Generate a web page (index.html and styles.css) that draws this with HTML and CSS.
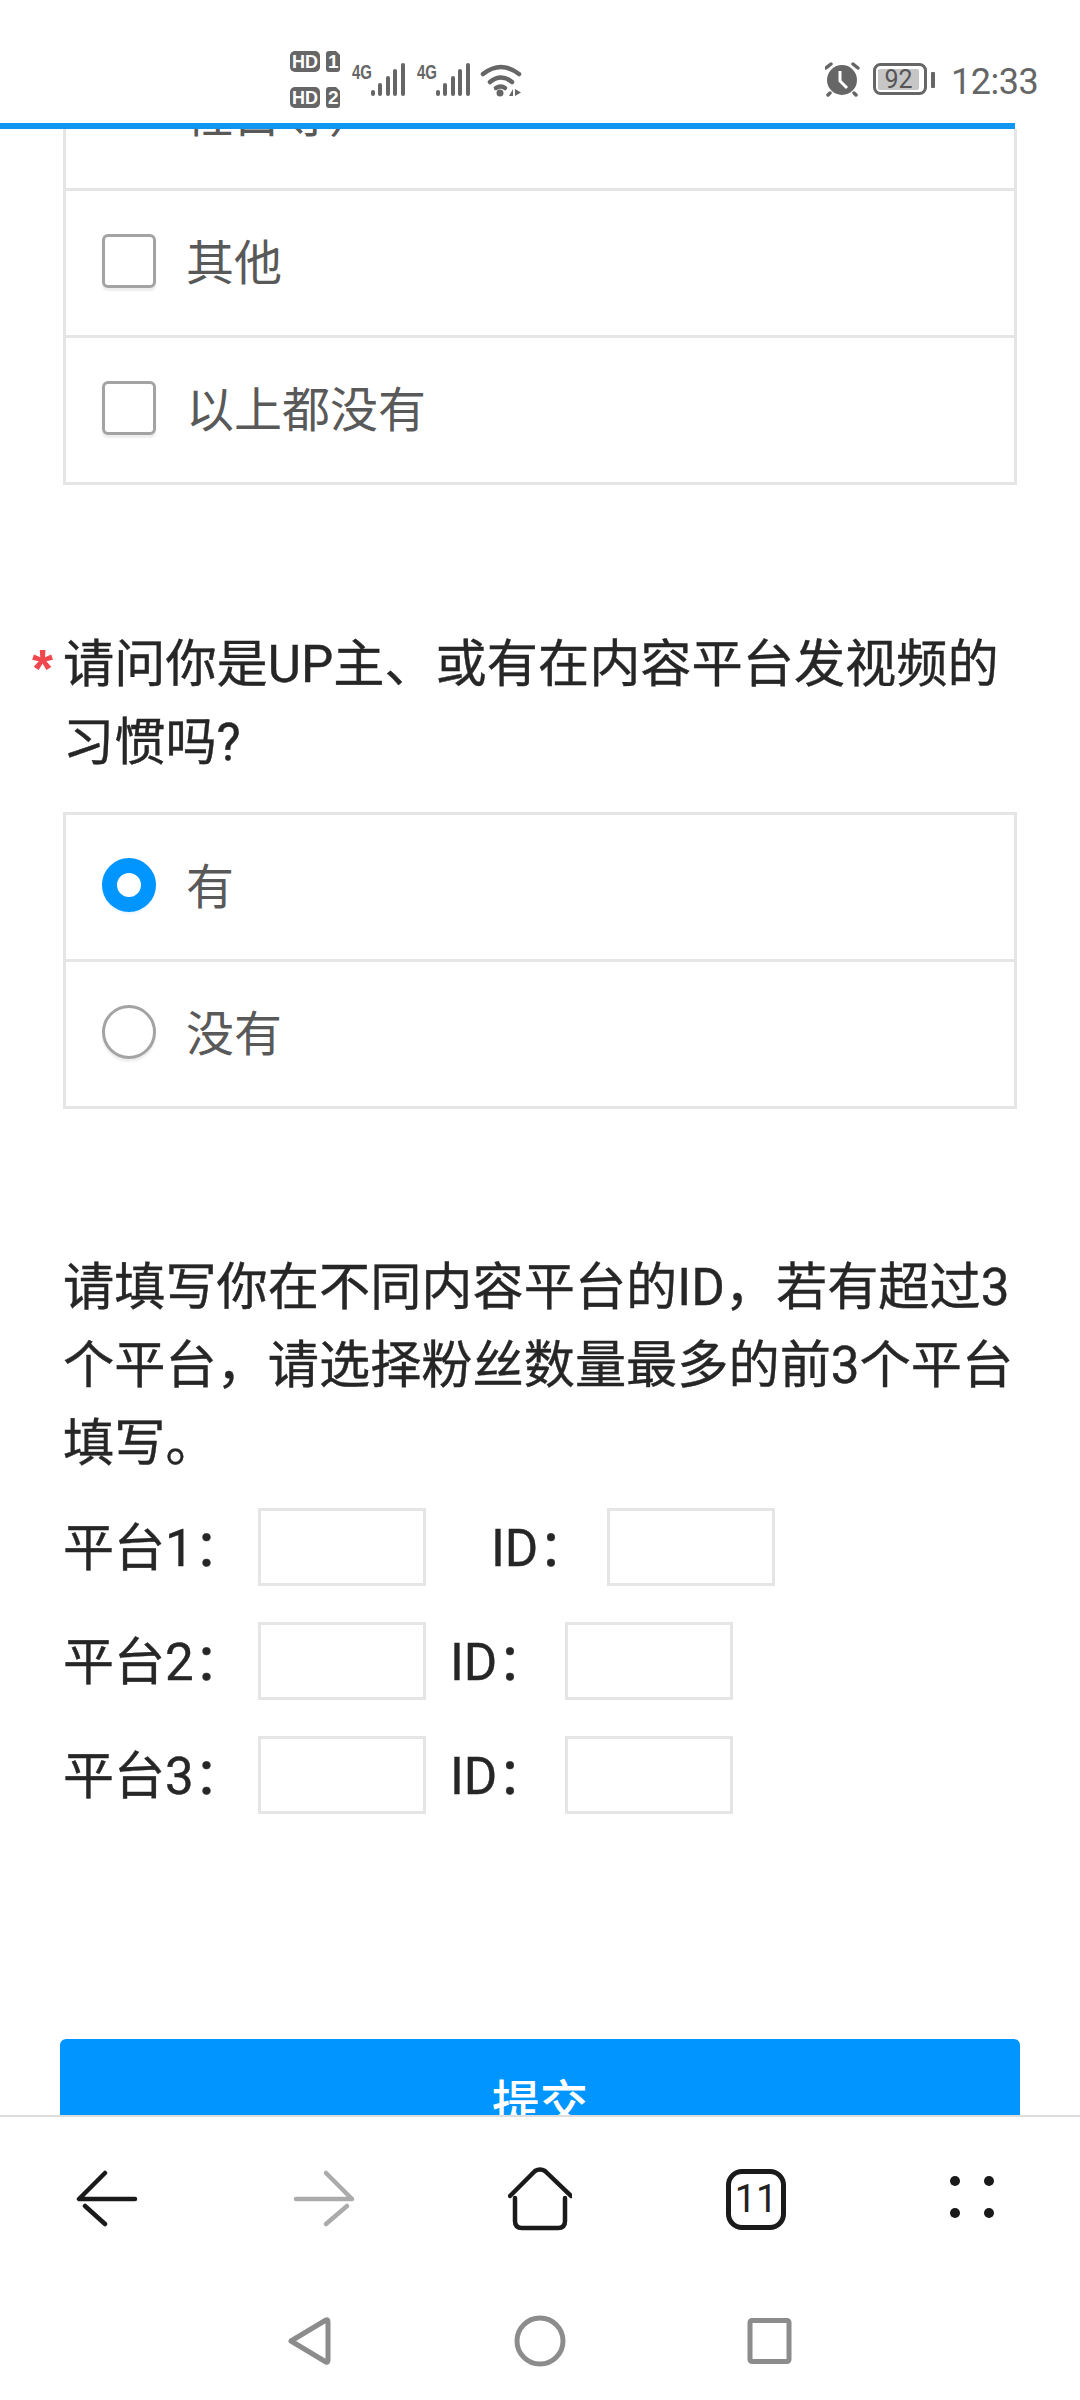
FILE: index.html

```html
<!DOCTYPE html>
<html lang="zh-CN">
<head>
  <meta charset="UTF-8" />
  <title>问卷</title>
  <link rel="stylesheet" href="styles.css">
</head>
<body>

  <div class="statusbar">
    <svg class="status-left" width="240" height="70" viewBox="290 45 240 70">
      <rect x="290" y="51" width="30" height="21" rx="5" fill="#666"/>
      <text x="292" y="67.5" class="sb-hd" textLength="26" lengthAdjust="spacingAndGlyphs">HD</text>
      <path d="M329 51h7l4 4v14a3 3 0 0 1-3 3h-8a3 3 0 0 1-3-3V54a3 3 0 0 1 3-3z" fill="#666"/>
      <text x="328" y="67.5" class="sb-hd">1</text>
      <rect x="290" y="87" width="30" height="21" rx="5" fill="#666"/>
      <text x="292" y="103.5" class="sb-hd" textLength="26" lengthAdjust="spacingAndGlyphs">HD</text>
      <path d="M329 87h7l4 4v14a3 3 0 0 1-3 3h-8a3 3 0 0 1-3-3V90a3 3 0 0 1 3-3z" fill="#666"/>
      <text x="328" y="103.5" class="sb-hd">2</text>

      <text x="352" y="79" class="sb-4g" textLength="20" lengthAdjust="spacingAndGlyphs">4G</text>
      <g fill="#666">
        <rect x="371" y="90" width="4" height="6" rx="2"/>
        <rect x="378" y="83" width="4" height="13" rx="2"/>
        <rect x="386" y="76" width="4" height="20" rx="2"/>
        <rect x="393" y="69" width="4" height="27" rx="2"/>
        <rect x="401" y="63" width="4" height="33" rx="2"/>
      </g>
      <text x="417" y="79" class="sb-4g" textLength="20" lengthAdjust="spacingAndGlyphs">4G</text>
      <g fill="#666">
        <rect x="436" y="90" width="4" height="6" rx="2"/>
        <rect x="443" y="83" width="4" height="13" rx="2"/>
        <rect x="451" y="76" width="4" height="20" rx="2"/>
        <rect x="458" y="69" width="4" height="27" rx="2"/>
        <rect x="466" y="63" width="4" height="33" rx="2"/>
      </g>

      <g fill="none" stroke="#666" stroke-width="4.500" stroke-linecap="round">
        <path d="M483 74q18-14 36 0"/>
        <path d="M490 82q11-9 22 0"/>
        <path d="M496 88q5-3 9 0"/>
      </g>
      <circle cx="500" cy="93" r="3.500" fill="#666"/>
      <path d="M509 96l4-7v7zM515 89l6 3.500-6 3.500z" fill="#666"/>
    </svg>

    <div class="status-right">
      <svg width="112" height="40" viewBox="825 60 112 40">
        <circle cx="842" cy="80" r="15" fill="#666"/>
        <path d="M826 68l5-4M858 68l-5-4M830 93l-2 2M854 93l2 2" stroke="#666" stroke-width="3.500" stroke-linecap="round" fill="none"/>
        <path d="M840 71v10l7 7" stroke="#fff" stroke-width="3" fill="none"/>
        <rect x="874.500" y="64.500" width="51" height="29" rx="6" fill="#fff" stroke="#666" stroke-width="3"/>
        <rect x="878" y="69" width="41" height="21" rx="2" fill="#c6c6c6"/>
        <text x="898.500" y="88" class="sb-batt">92</text>
        <rect x="931" y="72" width="4" height="16" rx="1" fill="#666"/>
      </svg>
      <span class="clock">12:33</span>
    </div>
  </div>
  <div class="progress"><div class="progress-fill"></div></div>

  <div class="page">
    <div class="form">

      <div class="opts">
        <div class="opt opt-cut">柱目等）</div>
        <label class="opt"><span class="check"></span>其他</label>
        <label class="opt"><span class="check"></span>以上都没有</label>
      </div>

      <div class="question">
        <span class="star">*</span>
        <div>请问你是UP主、或有在内容平台发视频的习惯吗?</div>
      </div>

      <div class="opts opts-top">
        <label class="opt"><span class="radio on"></span>有</label>
        <label class="opt"><span class="radio"></span>没有</label>
      </div>

      <p class="fill-title">请填写你在不同内容平台的ID，若有超过3个平台，请选择粉丝数量最多的前3个平台填写。</p>

      <div class="fill-rows">
        <div class="fill-row">
          <span class="fill-label">平台1：</span><span class="box"></span>
          <span class="fill-id fill-id-wide">ID：</span><span class="box"></span>
        </div>
        <div class="fill-row">
          <span class="fill-label">平台2：</span><span class="box"></span>
          <span class="fill-id">ID：</span><span class="box"></span>
        </div>
        <div class="fill-row">
          <span class="fill-label">平台3：</span><span class="box"></span>
          <span class="fill-id">ID：</span><span class="box"></span>
        </div>
      </div>

      <div class="submit">提交</div>
    </div>
  </div>

  <div class="toolbar">
    <div class="tool">
      <svg width="64" height="64" viewBox="76 2167 64 64" class="ico">
        <path d="M105 2173l-26 26M80 2199h55M85 2206l20 18"/>
      </svg>
    </div>
    <div class="tool">
      <svg width="64" height="64" viewBox="292 2167 64 64" class="ico ico-off">
        <path d="M326 2173l26 26M352 2199h-56M347 2206l-21 18"/>
      </svg>
    </div>
    <div class="tool">
      <svg width="64" height="64" viewBox="508 2167 64 64" class="ico">
        <path d="M510 2196l25-25q5-3 10 0l26 25"/>
        <path d="M515 2198v23q0 7 7 7h36q7 0 7-7v-23"/>
      </svg>
    </div>
    <div class="tool">
      <div class="tabs">11</div>
    </div>
    <div class="tool">
      <svg width="64" height="64" viewBox="940 2167 64 64">
        <circle cx="955" cy="2181" r="5" fill="#1a1a1a"/>
        <circle cx="989" cy="2181" r="5" fill="#1a1a1a"/>
        <circle cx="955" cy="2213" r="5" fill="#1a1a1a"/>
        <circle cx="989" cy="2213" r="5" fill="#1a1a1a"/>
      </svg>
    </div>
  </div>

  <div class="navbar">
    <svg class="nav-ico" width="60" height="60" viewBox="278 2311 60 60">
      <path d="M290 2341l35-21q2-1 2 2v38q0 3-2 2z"/>
    </svg>
    <svg class="nav-ico" width="60" height="60" viewBox="510 2311 60 60">
      <circle cx="540" cy="2341" r="23"/>
    </svg>
    <svg class="nav-ico" width="60" height="60" viewBox="740.500 2311 60 60">
      <rect x="749.500" y="2320.500" width="39" height="41" rx="2"/>
    </svg>
  </div>

</body>
</html>
```

FILE: styles.css

```css
* {
  box-sizing: border-box;
}
html, body {
  margin: 0;
  padding: 0;
}
body {
  width: 1080px;
  height: 2400px;
  display: flex;
  flex-direction: column;
  overflow: hidden;
  background-color: #fff;
  color: #262626;
  font-family: Roboto, "Noto Sans CJK SC", sans-serif;
}

/* status bar */
.statusbar {
  height: 123px;
  flex: none;
  display: flex;
  justify-content: space-between;
  padding: 0 43px 0 290px;
}
.status-left {
  margin-top: 45px;
}
.status-right {
  display: flex;
  align-items: flex-start;
  margin-top: 60px;
}
.clock {
  width: 86px;
  margin-left: 14px;
  font-size: 36px;
  letter-spacing: -0.5px;
  line-height: 44px;
  color: #666;
  white-space: nowrap;
}
.sb-hd {
  font-family: "Liberation Sans", sans-serif;
  font-size: 19px;
  font-weight: bold;
  fill: #fff;
}
.sb-4g {
  font-family: "Liberation Sans", sans-serif;
  font-size: 20px;
  font-weight: bold;
  fill: #666;
}
.sb-batt {
  font-family: Roboto, sans-serif;
  font-size: 25px;
  fill: #555;
  text-anchor: middle;
}
.progress {
  height: 6px;
  flex: none;
}
.progress-fill {
  width: 1015px;
  height: 100%;
  background-color: #0f96f0;
}

/* scrolled page */
.page {
  flex: 1;
  min-height: 0;
  overflow: hidden;
}
.form {
  margin-top: -52px;
  padding: 0 63px;
}
.opts {
  border-left: 3px solid #e5e5e5;
  border-right: 3px solid #e5e5e5;
}
.opts-top {
  border-top: 3px solid #e5e5e5;
  margin-top: 30px;
}
.opt {
  height: 147px;
  display: flex;
  align-items: center;
  padding: 0 0 8px 36px;
  border-bottom: 3px solid #e5e5e5;
  font-size: 48px;
  color: #595959;
}
.opt-cut {
  height: 114px;
  align-items: flex-start;
  padding: 0 0 0 119px;
  line-height: 78px;
}
.check, .radio {
  width: 54px;
  height: 54px;
  flex: none;
  margin: 4px 30px 0 0;
  border: 3px solid #a3a3a3;
  background-color: #fff;
  box-shadow: 0 3px 2px #eee;
}
.check {
  border-radius: 6px;
}
.radio {
  border-radius: 50%;
}
.radio.on {
  border: 15px solid #0095ff;
  box-shadow: 0 2px 2px #eaf5ff;
}

.question, .fill-title, .fill-row {
  -webkit-text-stroke: 0.4px #262626;
}
.question {
  display: flex;
  margin-top: 141px;
  font-size: 51.2px;
  line-height: 78px;
}
.star {
  width: 31px;
  flex: none;
  margin-left: -31px;
  padding-top: 3px;
  color: #f0484e;
  -webkit-text-stroke: 0;
  font-family: "Liberation Sans", sans-serif;
  font-weight: bold;
  font-size: 54px;
}
.fill-title {
  margin: 140px 0 0;
  font-size: 51.2px;
  line-height: 78px;
}
.fill-rows {
  margin-top: 25px;
  display: flex;
  flex-direction: column;
  gap: 36px;
}
.fill-row {
  display: flex;
  align-items: center;
  height: 78px;
  font-size: 51px;
}
.fill-label, .fill-id {
  padding-bottom: 6px;
  white-space: nowrap;
}
.fill-label {
  width: 195px;
}
.fill-id {
  width: 115px;
  margin-left: 24px;
}
.fill-id-wide {
  width: 116px;
  margin-left: 65px;
}
.box {
  width: 168px;
  height: 78px;
  flex: none;
  border: 3px solid #e5e5e5;
}
.submit {
  height: 130px;
  margin: 225px -3px 0;
  padding-top: 32px;
  border-radius: 6px;
  background-color: #0095ff;
  color: #fff;
  font-size: 48px;
  font-weight: 500;
  line-height: 66px;
  text-align: center;
}

/* browser toolbar */
.toolbar {
  height: 166px;
  flex: none;
  display: flex;
  border-top: 2px solid #ddd;
  background-color: #fff;
}
.tool {
  width: 216px;
  display: flex;
  align-items: center;
  justify-content: center;
}
.ico {
  fill: none;
  stroke: #1a1a1a;
  stroke-width: 4.500;
  stroke-linecap: round;
  stroke-linejoin: round;
}
.ico-off {
  stroke: #ababab;
}
.tabs {
  width: 60px;
  height: 61px;
  border: 5px solid #1a1a1a;
  border-radius: 16px;
  font-size: 38px;
  line-height: 51px;
  text-align: center;
  color: #222;
}

/* system nav */
.navbar {
  height: 119px;
  flex: none;
  display: flex;
  justify-content: center;
  padding-top: 30px;
  gap: 171px;
}
.nav-ico {
  fill: none;
  stroke: #8c8c8c;
  stroke-width: 5;
  stroke-linejoin: round;
}
```
